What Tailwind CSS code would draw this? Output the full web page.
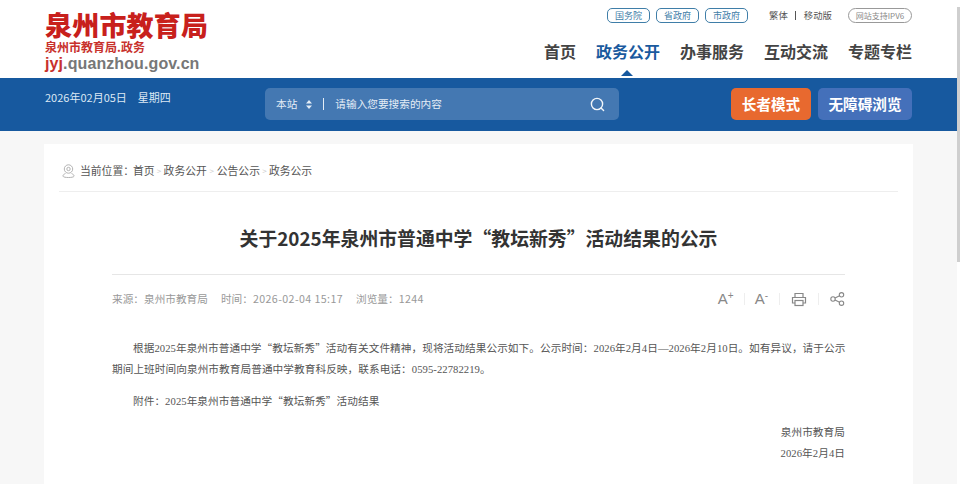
<!DOCTYPE html>
<html lang="zh-CN">
<head>
    <meta charset="UTF-8">
    <title>关于2025年泉州市普通中学“教坛新秀”活动结果的公示</title>
    <script src="https://cdn.jsdelivr.net/npm/@tailwindcss/browser@4"></script>
</head>
<body class="relative bg-white h-[484px] overflow-hidden font-['Noto_Sans_CJK_SC','Liberation_Sans',sans-serif]">
  <div class="w-[957px] h-[484px] bg-[#f7f7f7]">
    <!-- Header -->
    <div class="bg-white h-[78px] px-[45px] flex justify-between">
        <div class="pt-[10px]">
            <div class="text-[27px] leading-[30px] font-black tracking-[0.2px] text-[#c8201c]">泉州市教育局</div>
            <div class="text-[12px] leading-[13px] font-bold text-[#c8312c]">泉州市教育局.政务</div>
            <div class="mt-[1px] text-[16px] leading-[20px] font-bold tracking-[0.1px] text-[#777] font-['Liberation_Sans',sans-serif]"><span class="text-[#c8312c]">jyj</span>.quanzhou.gov.cn</div>
        </div>
        <div class="flex flex-col items-end pt-[7px]">
            <div class="flex items-center h-[16px] text-[9px] leading-[14px]">
                <a class="w-[43px] h-[15px] leading-[13px] text-center border border-[#3f7ea8] rounded-[5px] text-[#3f7ea8]">国务院</a>
                <a class="w-[43px] h-[15px] leading-[13px] text-center border border-[#3f7ea8] rounded-[5px] text-[#3f7ea8] ml-[6px]">省政府</a>
                <a class="w-[43px] h-[15px] leading-[13px] text-center border border-[#3f7ea8] rounded-[5px] text-[#3f7ea8] ml-[6px]">市政府</a>
                <span class="ml-[21px] text-[9.4px] text-[#555]">繁体</span>
                <span class="ml-[7px] mr-[8px] w-px h-[9px] bg-[#555]"></span>
                <span class="text-[9.4px] text-[#555]">移动版</span>
                <a class="ml-[16px] w-[64px] h-[15px] leading-[13px] text-center border border-[#999] rounded-full text-[#888] text-[8px]">网站支持IPV6</a>
            </div>
            <nav class="flex gap-[20px] mt-[18px] text-[16px] leading-[20px] font-bold text-[#444]">
                <a>首页</a>
                <a class="relative text-[#1a5a9e]">政务公开<span class="absolute left-[25px] top-[29px] w-0 h-0 border-x-[6px] border-x-transparent border-b-[6px] border-b-[#17599f]"></span></a>
                <a>办事服务</a>
                <a>互动交流</a>
                <a>专题专栏</a>
            </nav>
        </div>
    </div>

    <!-- Blue bar -->
    <div class="bg-[#17599f] h-[53px] px-[45px] flex text-white">
        <div class="text-[11px] leading-[14px] pt-[12px] text-[#dce8f4] w-[220px]">2026年02月05日<span class="ml-[11px]">星期四</span></div>
        <div class="mt-[10px] h-[32px] w-[354px] bg-[#4478b2] rounded-[5px] flex items-center text-[10.67px] text-[#e4edf6] pl-[11px] pr-[14px]">
            <span>本站</span>
            <svg class="ml-[9px]" width="6" height="9" viewBox="0 0 6 9" fill="#e4edf6"><path d="M3 0 6 3.5H0zM3 9 0 5.5H6z"/></svg>
            <span class="ml-[11px] w-px h-[12px] bg-[#e4edf6]"></span>
            <span class="ml-[11px]">请输入您要搜索的内容</span>
            <svg class="ml-auto" width="15" height="15" viewBox="0 0 15 15" fill="none" stroke="#f2f6fa" stroke-width="1.4"><circle cx="7" cy="7" r="5.6"/><path d="m11 11 2.6 2.6" stroke-linecap="round"/></svg>
        </div>
        <div class="ml-auto flex gap-[7px] mt-[10px] h-[32px] text-[14.6px] font-bold">
            <button class="w-[80px] rounded-[5px] bg-[#e8692f] text-white">长者模式</button>
            <button class="w-[94px] rounded-[5px] bg-[#4470ba] text-white">无障碍浏览</button>
        </div>
    </div>

    <!-- Content card -->
    <div class="mt-[13px] mx-[44px] w-[869px] h-[340px] bg-white px-[15px]">
        <div class="h-[48px] pt-[6px] pl-[3px] border-b border-[#eee] flex items-center text-[10.8px] text-[#555] whitespace-nowrap">
            <svg class="mr-[5px]" width="13" height="14" viewBox="0 0 13 14" fill="none" stroke="#aaa" stroke-width="0.9"><circle cx="6.5" cy="5" r="4.2"/><circle cx="6.5" cy="5" r="1.7"/><path d="M3.5 9.5C1.8 10.3.8 11 1 12.2c.3 1 3 1.3 5.5 1.3s5.2-.3 5.5-1.3c.2-1.2-.8-1.9-2.5-2.7"/></svg>
            <span class="w-[53px]">当前位置：</span>
            <span>首页</span><span class="w-[9px] text-center text-[#ccc] text-[8px]">&gt;</span>
            <span>政务公开</span><span class="w-[10px] text-center text-[#ccc] text-[8px]">&gt;</span>
            <span>公告公示</span><span class="w-[9px] text-center text-[#ccc] text-[8px]">&gt;</span>
            <span>政务公示</span>
        </div>

        <div class="mx-[53px]">
            <h1 class="pt-[34px] h-[83px] text-center text-[18.85px] leading-[24px] font-bold text-[#333] border-b border-[#e6e6e6]">关于2025年泉州市普通中学“教坛新秀”活动结果的公示</h1>
            <div class="h-[48px] flex items-center justify-between text-[10.67px] text-[#999]">
                <div class="flex gap-[13px]"><span>来源：泉州市教育局</span><span>时间：<span class="tracking-[0.4px]">2026-02-04 15:17</span></span><span>浏览量：<span class="tracking-[0.4px]">1244</span></span></div>
                <div class="flex items-center text-[#888]">
                    <span class="font-['Liberation_Sans',sans-serif] text-[15px] leading-[16px]">A<sup class="text-[10px] -top-[5px]">+</sup></span>
                    <span class="mx-[10px] w-px h-[12px] bg-[#eee]"></span>
                    <span class="font-['Liberation_Sans',sans-serif] text-[15px] leading-[16px]">A<sup class="text-[10px] -top-[5px]">-</sup></span>
                    <span class="mx-[11px] w-px h-[12px] bg-[#eee]"></span>
                    <svg width="16" height="15" viewBox="0 0 16 15" fill="none" stroke="#888" stroke-width="1.2"><path d="M4 5V1.5h8V5M4 11H1.5V5.5h13V11H12"/><rect x="4" y="8.5" width="8" height="5"/></svg>
                    <span class="mx-[11px] w-px h-[12px] bg-[#eee]"></span>
                    <svg width="15" height="14" viewBox="0 0 15 14" fill="none" stroke="#888" stroke-width="1.1"><circle cx="3" cy="7" r="2.2"/><circle cx="11.5" cy="2.8" r="2.2"/><circle cx="11.5" cy="11.2" r="2.2"/><path d="m5 6 4.6-2.2M5 8l4.6 2.2"/></svg>
                </div>
            </div>
            <div class="pt-[14px] text-[10.67px] leading-[21px] tracking-[0.05px] text-[#555] font-['Liberation_Serif','Noto_Sans_CJK_SC',serif]">
                <p class="indent-[21px] [text-align-last:justify] whitespace-nowrap">根据2025年泉州市普通中学<span class="font-['Noto_Sans_CJK_SC']">“</span>教坛新秀<span class="font-['Noto_Sans_CJK_SC']">”</span>活动有关文件精神，现将活动结果公示如下。公示时间：2026年2月4日—2026年2月10日。如有异议，请于公示</p>
                <p>期间上班时间向泉州市教育局普通中学教育科反映，联系电话：0595-22782219。</p>
                <p class="indent-[21px] mt-[10px]">附件：2025年泉州市普通中学<span class="font-['Noto_Sans_CJK_SC']">“</span>教坛新秀<span class="font-['Noto_Sans_CJK_SC']">”</span>活动结果</p>
                <p class="text-right mt-[10px]">泉州市教育局</p>
                <p class="text-right">2026年2月4日</p>
            </div>
        </div>
    </div>
  </div>

  <!-- Scrollbar thumb at the right edge -->
  <div class="absolute right-0 top-[7px] h-[255px] w-[3px] bg-[#cfcfcf]"></div>
</body>
</html>
